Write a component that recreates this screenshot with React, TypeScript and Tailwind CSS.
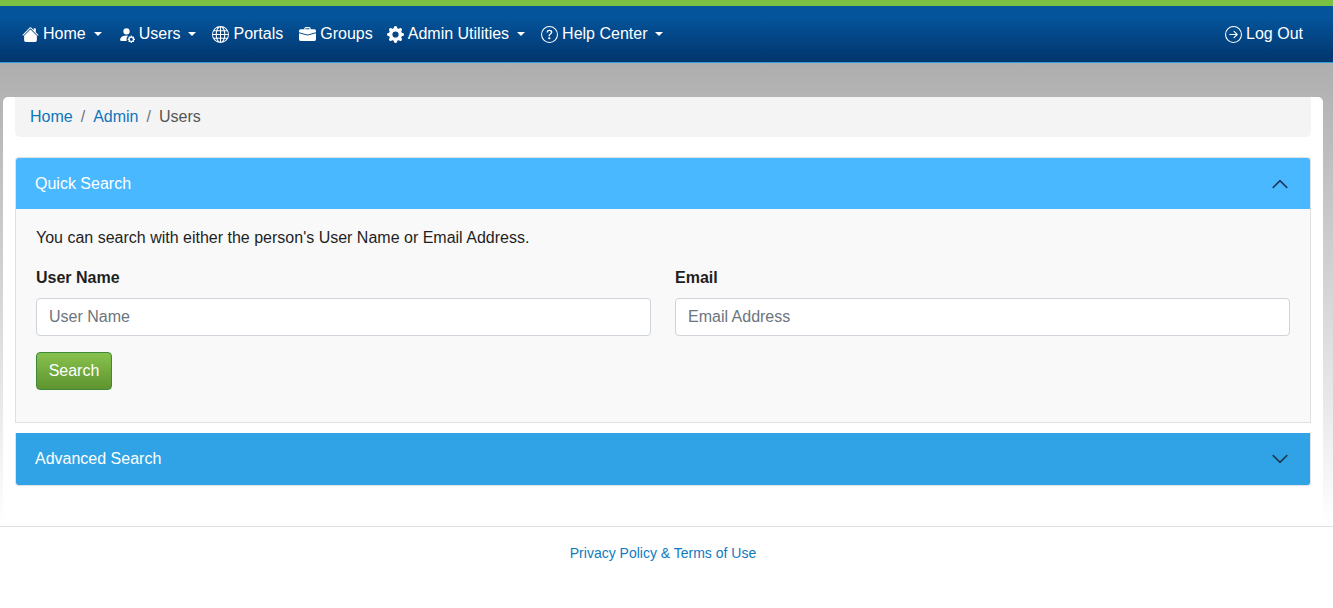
import React from 'react';
import { BsHouseFill, BsPersonFillGear, BsGlobe, BsBriefcaseFill, BsGearFill, BsQuestionCircle, BsArrowRightCircle, BsChevronUp, BsChevronDown } from 'react-icons/bs';

const Caret: React.FC = () => (
    <span className="ml-[8px] inline-block w-0 h-0 border-x-[4px] border-x-transparent border-t-[4px] border-t-white"></span>
);

const NavItem: React.FC<{ icon: React.ReactNode; label: string; caret?: boolean; className?: string }> = ({ icon, label, caret, className }) => (
    <a className={`flex items-center h-[24px] text-white text-[16px] ${className || ''}`}>
        <span className="w-[17px] mr-[4px] text-[17px] flex items-center justify-center">{icon}</span>
        {label}
        {caret && <Caret />}
    </a>
);

export default function App() {
    return (
        <div className="min-h-[608px] bg-white font-['Liberation_Sans',Arial,sans-serif] text-[16px] text-[#212529]">
            <nav className="h-[63px] border-t-[6px] border-t-[#7ac143] border-b border-b-[#2e9fe0] bg-linear-to-b from-[#04549c] from-20% to-[#02356c] flex items-center pl-[22px] pr-[30px]">
                <NavItem icon={<BsHouseFill />} label="Home" caret className="mr-[16px]" />
                <NavItem icon={<BsPersonFillGear />} label="Users" caret className="mr-[16px]" />
                <NavItem icon={<BsGlobe />} label="Portals" className="mr-[16px]" />
                <NavItem icon={<BsBriefcaseFill />} label="Groups" className="mr-[14px]" />
                <NavItem icon={<BsGearFill />} label="Admin Utilities" caret className="mr-[16px]" />
                <NavItem icon={<BsQuestionCircle />} label="Help Center" caret />
                <NavItem icon={<BsArrowRightCircle />} label="Log Out" className="ml-auto" />
            </nav>

            <div className="bg-linear-to-b from-[#aeaeae] to-white h-[463px] pt-[34px] pl-[3px] pr-[10px]">
                <div className="bg-white rounded-[5px] h-[429px] pl-[12px] pr-[12px]">
                    <div className="h-[40px] bg-[#f4f4f4] rounded-b-[5px] flex items-center px-[15px] text-[#6c757d]">
                        <a className="text-[#0f75bc]">Home</a>
                        <span className="px-[8px]">/</span>
                        <a className="text-[#0f75bc]">Admin</a>
                        <span className="px-[8px]">/</span>
                        <span className="text-[#555]">Users</span>
                    </div>

                    <div className="mt-[20px] rounded-t-[4px] h-[52px] bg-[#4ab8ff] border border-b-0 border-[#dfe3e8] flex items-center justify-between pl-[19px] pr-[21px] pt-[1px] text-white">
                        Quick Search
                        <BsChevronUp className="text-[#1c2c4c] text-[18px]" stroke="currentColor" strokeWidth={0.5} />
                    </div>
                    <div className="h-[214px] bg-[#f9f9f9] border border-t-0 border-[#dfdfe4] px-[20px] pt-[20px]">
                        <p className="leading-[18px] text-[#1f1f1f]">You can search with either the person's User Name or Email Address.</p>
                        <div className="mt-[22px] grid grid-cols-2 gap-x-[24px]">
                            <div>
                                <label className="block font-bold leading-[18px] text-[#1f1f1f]">User Name</label>
                                <input placeholder="User Name" className="mt-[11px] w-full h-[38px] bg-white border border-[#ced4da] rounded-[4px] px-[12px] outline-none placeholder:text-[#6c757d]" />
                            </div>
                            <div>
                                <label className="block font-bold leading-[18px] text-[#1f1f1f]">Email</label>
                                <input placeholder="Email Address" className="mt-[11px] w-full h-[38px] bg-white border border-[#ced4da] rounded-[4px] px-[12px] outline-none placeholder:text-[#6c757d]" />
                            </div>
                        </div>
                        <button className="mt-[16px] h-[38px] w-[76px] rounded-[4px] border border-[#3f8a3a] bg-linear-to-b from-[#88c24d] to-[#5f9430] text-white">Search</button>
                    </div>

                    <div className="mt-[10px] rounded-b-[4px] h-[53px] bg-[#2fa3e6] border border-t-0 border-[#dfe3e8] flex items-center justify-between pl-[19px] pr-[21px] text-white">
                        Advanced Search
                        <BsChevronDown className="text-[#1f2f40] text-[18px]" stroke="currentColor" strokeWidth={0.5} />
                    </div>
                </div>
            </div>

            <footer className="border-t border-t-[#dfdfe4] pt-[18px] pr-[7px] text-center text-[14px] leading-[17px] text-[#0f7ac0]">
                <a>Privacy Policy &amp; Terms of Use</a>
            </footer>
        </div>
    );
}
